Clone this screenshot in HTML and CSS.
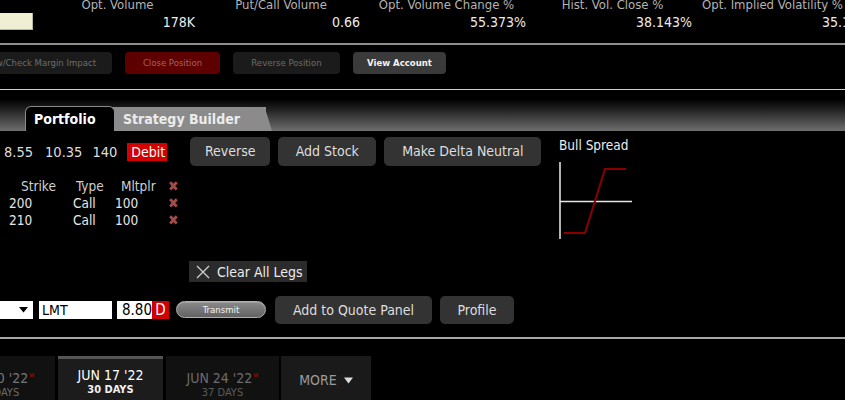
FILE: index.html
```html
<!DOCTYPE html>
<html>
<head>
<meta charset="utf-8">
<link rel="stylesheet" href="styles.css">
</head>
<body>
<div class="page">
  <div class="stats">
    <div class="stat-first"><div class="cream"></div></div>
    <div class="stat w162"><div class="lbl">Opt. Volume</div><div class="val">178K</div></div>
    <div class="stat w165"><div class="lbl">Put/Call Volume</div><div class="val">0.66</div></div>
    <div class="stat w166"><div class="lbl">Opt. Volume Change %</div><div class="val">55.373%</div></div>
    <div class="stat w166"><div class="lbl">Hist. Vol. Close %</div><div class="val">38.143%</div></div>
    <div class="stat w166"><div class="lbl">Opt. Implied Volatility %</div><div class="val">35.14%</div></div>
  </div>

  <div class="actions">
    <div class="abtn a1">Preview/Check Margin Impact</div>
    <div class="abtn a2">Close Position</div>
    <div class="abtn a3">Reverse Position</div>
    <div class="abtn a4">View Account</div>
  </div>

  <div class="tabbar">
    <div class="tab tab-s">s</div>
    <div class="tab tab-active">Portfolio</div>
    <div class="tab tab-grey">Strategy Builder</div>
  </div>

  <div class="main">
    <div class="left">
      <div class="row3">
        <span class="q q1">8.55</span>
        <span class="q q2">10.35</span>
        <span class="q q3">140</span>
        <span class="debit">Debit</span>
        <div class="btn b-rev">Reverse</div>
        <div class="btn b-stock">Add Stock</div>
        <div class="btn b-delta">Make Delta Neutral</div>
      </div>

      <div class="legs">
        <div class="leg head">
          <span class="c1 h1">Strike</span><span class="c2 h2">Type</span><span class="c3 h3">Mltplr</span><span class="c4 x">&#x2716;</span>
        </div>
        <div class="leg">
          <span class="c1 r1">200</span><span class="c2 r2">Call</span><span class="c3 r3">100</span><span class="c4 x">&#x2716;</span>
        </div>
        <div class="leg">
          <span class="c1 r1">210</span><span class="c2 r2">Call</span><span class="c3 r3">100</span><span class="c4 x">&#x2716;</span>
        </div>
      </div>

      <div class="clear-row">
        <div class="clear-btn">
          <svg class="clear-x" width="14" height="14" viewBox="0 0 14 14"><path d="M1 1 L13 13 M13 1 L1 13" stroke="#cfcfcf" stroke-width="1.3" fill="none"/></svg>
          <span>Clear All Legs</span>
        </div>
      </div>

      <div class="order-row">
        <div class="sel"><svg width="9" height="6" viewBox="0 0 9 6"><path d="M0 0 L9 0 L4.5 5.5 Z" fill="#000"/></svg></div>
        <div class="inp lmt">LMT</div>
        <div class="price"><span class="pv">8.80</span><span class="pd">D</span></div>
        <div class="transmit">Transmit</div>
        <div class="btn b-quote">Add to Quote Panel</div>
        <div class="btn b-profile">Profile</div>
      </div>
    </div>

    <div class="right">
      <div class="strat-title">Bull Spread</div>
      <svg class="chart" width="80" height="80" viewBox="0 0 80 80">
        <line x1="1" y1="0" x2="1" y2="77" stroke="#fff" stroke-width="1.4"/>
        <line x1="1" y1="39.5" x2="73" y2="39.5" stroke="#e6e6e6" stroke-width="1.3"/>
        <polyline points="5,71 26,71 46,7 67,7" fill="none" stroke="#8a0000" stroke-width="2"/>
      </svg>
    </div>
  </div>

  <div class="expiries">
    <div class="exp e1"><div class="ed">JUN 10 '22<sup>w</sup></div><div class="ey">23 DAYS</div></div>
    <div class="exp e2"><div class="ed">JUN 17 '22</div><div class="ey">30 DAYS</div></div>
    <div class="exp e3"><div class="ed">JUN 24 '22<sup>w</sup></div><div class="ey">37 DAYS</div></div>
    <div class="exp e4"><span>MORE</span><svg width="9" height="7" viewBox="0 0 9 7"><path d="M0 0.5 L9 0.5 L4.5 6.5 Z" fill="#dcdcdc"/></svg></div>
  </div>
</div>
</body>
</html>
```

FILE: styles.css
```css
html, body {
  margin: 0;
  padding: 0;
  background: #000;
}
body {
  width: 845px;
  height: 400px;
  overflow: hidden;
  font-family: "DejaVu Sans Condensed", "DejaVu Sans", sans-serif;
  color: #e6e6e6;
}
.page {
  width: 845px;
  overflow: hidden;
}

/* ---------- stats ---------- */
.stats {
  display: flex;
  height: 44px;
  margin-top: -1px;
  border-bottom: 2px solid #8e8e8e;
  white-space: nowrap;
}
.stat-first {
  width: 33px;
  flex: none;
}
.cream {
  margin-top: 14px;
  width: 32px;
  height: 16px;
  background: #efefd3;
  border-right: 1px solid #b8b8a0;
  border-bottom: 1px solid #b8b8a0;
}
.stat {
  flex: none;
  display: flex;
  flex-direction: column;
}
.w162 { width: 162px; }
.w165 { width: 165px; }
.w166 { width: 166px; }
.lbl {
  font-size: 13px;
  line-height: 12px;
  color: #b4b4b4;
  text-align: center;
  padding-left: 7px;
  white-space: nowrap;
}
.stat:last-child .lbl { text-align: left; padding-left: 10px; }
.stat:last-child .val { text-align: left; padding-left: 130px; }
.val {
  font-size: 14px;
  line-height: 14px;
  margin-top: 4px;
  text-align: right;
  color: #ececec;
}

/* ---------- action bar ---------- */
.actions {
  display: flex;
  gap: 13px;
  height: 37px;
  padding-top: 7px;
  border-bottom: 1px solid #d0d0d0;
  margin-left: -60px;
}
.abtn {
  height: 22px;
  line-height: 22px;
  border-radius: 4px;
  font-size: 9.5px;
  text-align: center;
  white-space: nowrap;
  flex: none;
}
.a1 { width: 172px; background: #1b1b1b; color: #6c6c6c; text-align: right; padding-right: 16px; box-sizing: border-box; }
.a2 { width: 95px; background: #5e0000; color: #a86060; }
.a3 { width: 107px; background: #1b1b1b; color: #6c6c6c; }
.a4 { width: 93px; background: #3a3a3a; color: #f4f4f4; font-weight: bold; }

/* ---------- tabs ---------- */
.tabbar {
  height: 41px;
  display: flex;
  align-items: flex-end;
  background: linear-gradient(to bottom, #000 0px, #000 9px, #1c1c1c 18px, #6e6e6e 41px);
}
.tab {
  font-size: 14px;
  font-weight: bold;
  white-space: nowrap;
  flex: none;
}
.tab-s {
  width: 25px;
  height: 24px;
  line-height: 26px;
  text-indent: -9px;
  color: #fff;
  overflow: hidden;
}
.tab-active {
  height: 24px;
  line-height: 25px;
  background: #000;
  border: 1px solid #8a8a8a;
  border-bottom: none;
  border-radius: 6px 6px 0 0;
  color: #fff;
  padding-left: 8px;
  box-sizing: content-box;
  margin-right: -8px;
  position: relative;
  z-index: 1;
  width: 80px;
}
.tab-grey {
  position: relative;
  width: 143px;
  height: 24px;
  line-height: 24px;
  background: #8b8b8b;
  color: #ececec;
  padding-left: 16px;
  border-radius: 6px 0 0 0;
}
.tab-grey::after {
  content: "";
  position: absolute;
  top: 0;
  right: -6px;
  width: 14px;
  height: 24px;
  background: #8b8b8b;
  transform: skewX(17deg);
  transform-origin: bottom left;
  border-radius: 0 6px 0 0;
}

/* ---------- main ---------- */
.main {
  display: flex;
  border-bottom: 2px solid #a8a8a8;
  height: 206px;
}
.left {
  width: 559px;
  flex: none;
}
.row3 {
  display: flex;
  align-items: center;
  height: 29px;
  margin-top: 6px;
  font-size: 14.5px;
  white-space: nowrap;
}
.q { color: #dedede; }
.q1 { margin-left: 4px; }
.q2 { margin-left: 12px; }
.q3 { margin-left: 10px; }
.debit {
  margin-left: 10px;
  background: #d20000;
  color: #fff;
  height: 18px;
  line-height: 18px;
  padding: 0 4px;
  width: 32px;
  text-align: center;
  font-size: 14px;
}
.btn {
  flex: none;
  background: #333;
  border-radius: 5px;
  color: #dedede;
  font-size: 14px;
  text-align: center;
  height: 29px;
  line-height: 29px;
  white-space: nowrap;
}
.b-rev { margin-left: 23px; width: 80px; }
.b-stock { margin-left: 8px; width: 98px; }
.b-delta { margin-left: 8px; width: 157px; }

.legs {
  margin-top: 12px;
  font-size: 13.5px;
}
.leg {
  display: flex;
  height: 17px;
  line-height: 17px;
  white-space: nowrap;
}
.c1 { width: 66px; }
.c2 { width: 46px; }
.c3 { width: 55px; }
.c4 { width: 20px; }
.h1 { padding-left: 21px; box-sizing: border-box; color: #cfcfcf; }
.h2 { padding-left: 10px; box-sizing: border-box; color: #cfcfcf; }
.h3 { padding-left: 9px; box-sizing: border-box; color: #cfcfcf; }
.r1 { padding-left: 9px; box-sizing: border-box; }
.r2 { padding-left: 7px; box-sizing: border-box; }
.r3 { padding-left: 3px; box-sizing: border-box; }
.x {
  color: #a44c4a;
  font-size: 14px;
  padding-left: 1px;
}

.clear-row {
  margin-top: 32px;
  padding-left: 189px;
}
.clear-btn {
  display: inline-flex;
  align-items: center;
  gap: 7px;
  height: 21px;
  padding: 0 4px 0 7px;
  background: #2b2b2b;
  font-size: 14px;
  color: #ececec;
  white-space: nowrap;
}

.order-row {
  display: flex;
  align-items: center;
  margin-top: 13px;
  height: 28px;
  font-size: 14px;
  white-space: nowrap;
}
.sel {
  width: 33px;
  height: 18px;
  background: #fff;
  display: flex;
  align-items: center;
  justify-content: flex-end;
  padding-right: 5px;
  box-sizing: border-box;
}
.inp {
  background: #fff;
  color: #000;
  height: 18px;
  line-height: 18px;
}
.lmt {
  margin-left: 6px;
  width: 70px;
  padding-left: 3px;
}
.price {
  margin-left: 5px;
  display: flex;
  height: 18px;
  line-height: 18px;
}
.pv {
  background: #fff;
  color: #000;
  width: 35px;
  text-align: right;
  font-size: 15px;
}
.pd {
  background: #d20000;
  color: #fff;
  width: 17px;
  text-align: center;
  font-size: 15px;
}
.transmit {
  margin-left: 7px;
  width: 88px;
  height: 15px;
  line-height: 15px;
  border: 1px solid #b0b0b0;
  border-radius: 9px;
  background: linear-gradient(to bottom, #8a8a8a, #626262);
  color: #f2f2f2;
  font-size: 9.5px;
  text-align: center;
  box-shadow: inset 0 1px 0 rgba(255,255,255,0.2);
}
.b-quote { margin-left: 9px; width: 157px; height: 28px; line-height: 28px; }
.b-profile { margin-left: 8px; width: 74px; height: 28px; line-height: 28px; }

.right {
  flex: none;
  padding-top: 7px;
}
.strat-title {
  font-size: 13.5px;
  color: #ececec;
  line-height: 14px;
  white-space: nowrap;
}
.chart {
  display: block;
  margin-top: 10px;
}

/* ---------- expiries ---------- */
.expiries {
  display: flex;
  margin-top: 17px;
  margin-left: -58px;
  gap: 3px;
  align-items: flex-start;
}
.exp {
  flex: none;
  height: 42px;
  background: #111;
  text-align: center;
  white-space: nowrap;
  border-top: 3px solid transparent;
}
.ed {
  font-size: 14px;
  line-height: 16px;
  margin-top: 8px;
}
.ed sup {
  font-size: 7px;
  color: #c00000;
  vertical-align: 6px;
  margin-left: 1px;
}
.ey {
  font-size: 11px;
  line-height: 12px;
  margin-top: 1px;
}
.e1 { width: 113px; color: #777; }
.e1 .ey { color: #6a6a6a; }
.e2 { width: 105px; background: #1c1c1c; border-top-color: #555; color: #fff; }
.e2 .ey { font-weight: bold; color: #f0f0f0; }
.e3 { width: 113px; color: #6c6c6c; }
.e3 .ey { color: #5c5c5c; }
.e4 {
  width: 90px;
  margin-left: -1px;
  background: #1a1a1a;
  color: #9a9a9a;
  font-size: 14px;
  display: flex;
  align-items: center;
  justify-content: center;
  gap: 7px;
  height: 42px;
  padding-bottom: 3px;
  box-sizing: content-box;
}
```
